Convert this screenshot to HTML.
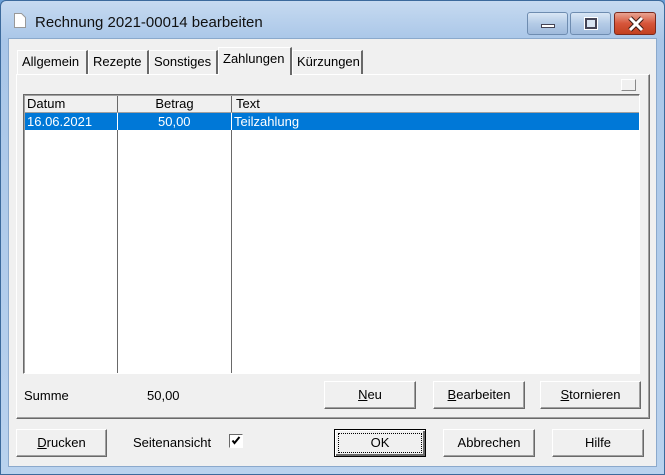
<!DOCTYPE html>
<html><head><style>
*{margin:0;padding:0;box-sizing:border-box}
body{width:665px;height:475px;overflow:hidden;background:#6a9fd6;font-family:"Liberation Sans",sans-serif;font-size:13px;color:#000;position:relative}
.abs{position:absolute}
.frame{left:0;top:0;width:665px;height:475px;background:linear-gradient(#c6daf0,#a9c6e8 40px,#b9d2ee);border:1px solid #3c6a9c;border-radius:6px 6px 0 0}
.client{left:8px;top:38px;width:649px;height:429px;background:#f0f0f0;border:1px solid #8ba9cc}
.btn{position:absolute;background:#f0f0f0;border:1px solid;border-color:#fff #696969 #696969 #fff;box-shadow:inset -1px -1px 0 #a0a0a0;text-align:center;line-height:25px;font-size:13px}
.tab{position:absolute;top:50px;height:24px;border-right:2px solid #696969;border-left:1px solid #fff;border-top:1px solid #fff;line-height:21px;padding-left:4px;font-size:13px}
u{text-decoration:underline}
</style></head><body>
<div class="abs frame"></div>
<svg class="abs" style="left:13px;top:12px" width="14" height="17"><path d="M1.5 1.5h7l4 4v10h-11z" fill="#fff" stroke="#999"/></svg>
<div class="abs" style="left:35px;top:14px;font-size:15px;color:#111">Rechnung 2021-00014 bearbeiten</div>
<div class="abs" style="left:527px;top:12px;width:41px;height:23px;border:1px solid #6e8cb0;border-radius:3px;background:linear-gradient(#d9e6f5,#b4cbe6 50%,#9fbadc)"><div class="abs" style="left:13px;top:11px;width:14px;height:4px;background:#fff;border:1px solid #445"></div></div>
<div class="abs" style="left:570px;top:12px;width:41px;height:23px;border:1px solid #6e8cb0;border-radius:3px;background:linear-gradient(#d9e6f5,#b4cbe6 50%,#9fbadc)"><div class="abs" style="left:14px;top:5px;width:12px;height:11px;border:2px solid #445;background:#d8e4f2;outline:1px solid #fff"></div></div>
<div class="abs" style="left:614px;top:12px;width:42px;height:23px;border:1px solid #7a2a1e;border-radius:3px;background:linear-gradient(#e9a493,#d6553a 50%,#c2401f)"><svg class="abs" style="left:12px;top:3px" width="18" height="16"><path d="M3 2L15 14M15 2L3 14" stroke="#3a1a14" stroke-width="5"/><path d="M3 2L15 14M15 2L3 14" stroke="#fff" stroke-width="3"/></svg></div>
<div class="abs client"></div>
<!-- tab panel -->
<div class="abs" style="left:16px;top:74px;width:634px;height:345px;border:1px solid;border-color:#fff #696969 #696969 #fff;box-shadow:inset -1px -1px 0 #a0a0a0"></div>
<div class="tab" style="left:17px;width:71px">Allgemein</div>
<div class="tab" style="left:88px;width:61px">Rezepte</div>
<div class="tab" style="left:149px;width:69px">Sonstiges</div>
<div class="tab" style="left:218px;top:47px;height:28px;width:74px;background:#f0f0f0;border-bottom:none">Zahlungen</div>
<div class="tab" style="left:292px;width:71px">Kürzungen</div>
<div class="abs" style="left:621px;top:79px;width:15px;height:12px;border:1px solid;border-color:#fff #888 #888 #fff;background:#f0f0f0"></div>
<!-- list -->
<div class="abs" style="left:23px;top:94px;width:617px;height:280px;background:#fff;border:1px solid;border-color:#696969 #fff #fff #696969;box-shadow:inset 1px 1px 0 #a0a0a0"></div>
<div class="abs" style="left:25px;top:96px;width:614px;height:16px;background:#f0f0f0"></div>
<div class="abs" style="left:25px;top:96px;width:93px;height:16px;border-right:1px solid #696969;padding-left:2px;line-height:15px">Datum</div>
<div class="abs" style="left:118px;top:96px;width:114px;height:16px;border-right:1px solid #696969;text-align:center;line-height:15px">Betrag</div>
<div class="abs" style="left:233px;top:96px;height:16px;padding-left:3px;line-height:15px">Text</div>
<div class="abs" style="left:25px;top:112px;width:614px;height:1px;background:#a0a0a0"></div>
<div class="abs" style="left:117px;top:113px;width:1px;height:260px;background:#696969"></div>
<div class="abs" style="left:231px;top:113px;width:1px;height:260px;background:#696969"></div>
<div class="abs" style="left:25px;top:113px;width:614px;height:17px;background:#0078d7;color:#fff;line-height:17px">
 <span class="abs" style="left:2px">16.06.2021</span><span class="abs" style="left:133px">50,00</span><span class="abs" style="left:209px">Teilzahlung</span>
 <div class="abs" style="left:92px;top:0;width:1px;height:17px;background:#fff"></div><div class="abs" style="left:206px;top:0;width:1px;height:17px;background:#fff"></div>
</div>
<div class="abs" style="left:24px;top:388px">Summe</div>
<div class="abs" style="left:147px;top:388px">50,00</div>
<div class="btn" style="left:324px;top:381px;width:92px;height:28px"><u>N</u>eu</div>
<div class="btn" style="left:433px;top:381px;width:92px;height:28px"><u>B</u>earbeiten</div>
<div class="btn" style="left:540px;top:381px;width:101px;height:28px"><u>S</u>tornieren</div>
<div class="btn" style="left:16px;top:429px;width:91px;height:28px"><u>D</u>rucken</div>
<div class="abs" style="left:133px;top:435px">Seitenansicht</div>
<div class="abs" style="left:229px;top:434px;width:14px;height:14px;background:#fff;border:1px solid;border-color:#696969 #fff #fff #696969"><svg width="12" height="12"><path d="M2.5 5.5l2 2.5 5-6" stroke="#000" stroke-width="2" fill="none"/></svg></div>
<div class="btn" style="left:334px;top:429px;width:92px;height:28px;border-color:#000;box-shadow:inset 1px 1px 0 #fff,inset -2px -2px 0 #696969"><div class="abs" style="left:3px;top:3px;right:3px;bottom:3px;border:1px dotted #000"></div>OK</div>
<div class="btn" style="left:443px;top:429px;width:92px;height:28px">Abbrechen</div>
<div class="btn" style="left:552px;top:429px;width:92px;height:28px">Hilfe</div>
</body></html>
